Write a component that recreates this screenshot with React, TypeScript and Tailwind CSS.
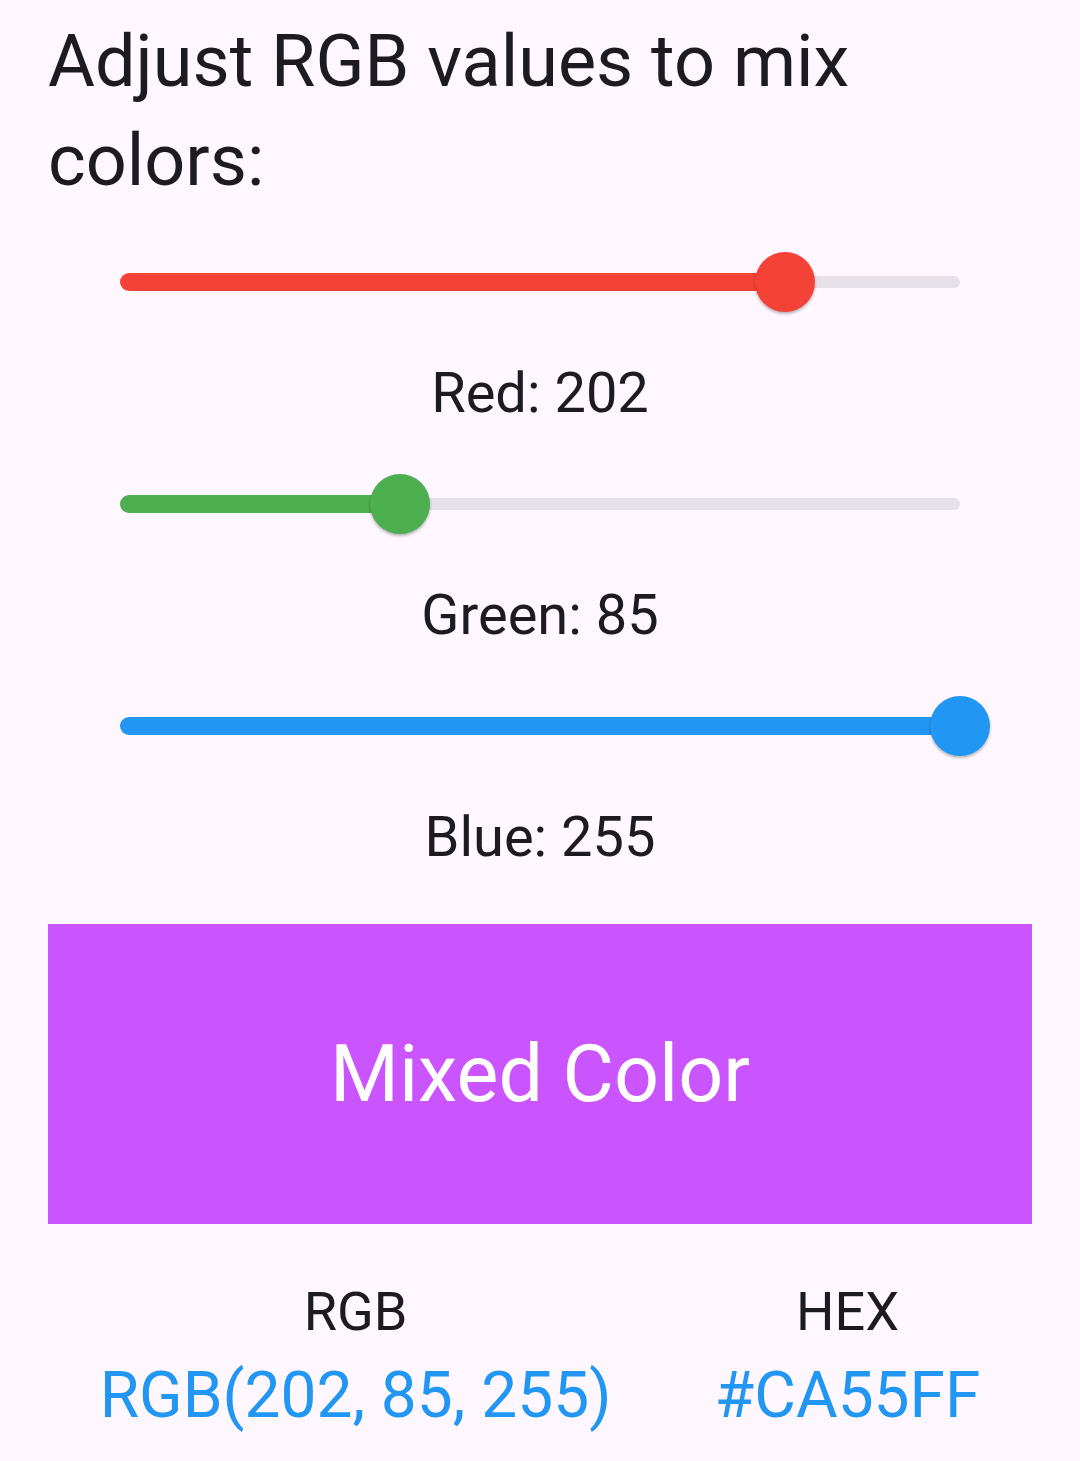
import { useState } from "react";

interface ColorSliderProps {
  value: number;
  color: string;
  onChange: (v: number) => void;
}

function ColorSlider({ value, color, onChange }: ColorSliderProps) {
  const pct = (value / 255) * 100;

  return (
    <div className="h-[144px] px-[72px] flex items-center">
      <div className="relative w-full h-[18px]">
        {/* inactive part of the track */}
        <div
          className="absolute right-0 top-[3px] h-[12px] rounded-r-full bg-[#e6e0e9]"
          style={{ width: `${100 - pct}%` }}
        />
        {/* active part */}
        <div
          className="absolute left-0 top-0 h-[18px] rounded-l-full"
          style={{ width: `${pct}%`, backgroundColor: color }}
        />
        <div
          className="absolute top-1/2 w-[60px] h-[60px] -ml-[30px] -mt-[30px] rounded-full shadow-[0_2px_3px_rgba(0,0,0,0.28)]"
          style={{ left: `${pct}%`, backgroundColor: color }}
        />
        <input
          type="range"
          min={0}
          max={255}
          value={value}
          onChange={(e) => onChange(Number(e.target.value))}
          className="absolute inset-0 w-full h-full opacity-0 cursor-pointer"
        />
      </div>
    </div>
  );
}

const toHex = (n: number) => n.toString(16).padStart(2, "0").toUpperCase();

export default function App() {
  const [red, setRed] = useState(202);
  const [green, setGreen] = useState(85);
  const [blue, setBlue] = useState(255);

  const hex = `#${toHex(red)}${toHex(green)}${toHex(blue)}`;

  return (
    <div className="min-h-[1461px] bg-[#fef7ff] px-[48px] pt-[12px] font-['Roboto',sans-serif] text-[#1d1b20]">
      <h1 className="text-[72px] leading-[99px] font-normal">
        Adjust RGB values to mix colors:
      </h1>

      <ColorSlider value={red} color="#f44336" onChange={setRed} />
      <p className="text-center text-[56px] leading-[78px]">Red: {red}</p>

      <ColorSlider value={green} color="#4caf50" onChange={setGreen} />
      <p className="text-center text-[56px] leading-[78px]">Green: {green}</p>

      <ColorSlider value={blue} color="#2196f3" onChange={setBlue} />
      <p className="text-center text-[56px] leading-[78px]">Blue: {blue}</p>

      <div
        className="mt-[48px] h-[300px] flex items-center justify-center"
        style={{ backgroundColor: `rgb(${red}, ${green}, ${blue})` }}
      >
        <span className="text-white text-[79px]">Mixed Color</span>
      </div>

      <div className="mt-[60px] flex justify-around">
        <div className="flex flex-col items-center">
          <span className="text-[54px] leading-[56px]">RGB</span>
          <span className="mt-[17px] text-[64px] leading-[77px] text-[#2196f3]">
            RGB({red}, {green}, {blue})
          </span>
        </div>
        <div className="flex flex-col items-center">
          <span className="text-[54px] leading-[56px]">HEX</span>
          <span className="mt-[17px] text-[64px] leading-[77px] text-[#2196f3]">
            {hex}
          </span>
        </div>
      </div>
    </div>
  );
}
